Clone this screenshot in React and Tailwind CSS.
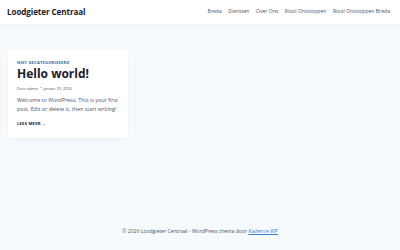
export default function App() {
  const nav = ["Breda", "Diensten", "Over Ons", "Riool Ontstoppen", "Riool Ontstoppen Breda"];

  return (
    <div className="h-[250px] w-[400px] flex flex-col bg-[#f7fafc] font-['Open_Sans',sans-serif] text-[#2d3748]">
      {/* header */}
      <header className="h-[24px] shrink-0 bg-white flex items-center justify-between pl-[7px] pr-[10px] shadow-[0_1px_4px_rgba(0,0,0,0.04)]">
        <div className="text-[8.1px] font-bold text-[#1a202c] tracking-[-0.1px]">Loodgieter Centraal</div>
        <nav className="flex gap-[6.5px] text-[5.1px] text-[#4a5568]">
          {nav.map((n) => (
            <span key={n}>{n}</span>
          ))}
        </nav>
      </header>

      {/* main */}
      <main className="flex-1 px-[8px] pt-[26px]">
        <article className="w-[120px] h-[88px] bg-white shadow-[0_3px_8px_-4px_rgba(0,0,0,0.1)] px-[9px] pt-[10px]">
          <div className="text-[4.1px] font-bold uppercase tracking-[0.2px] text-[#2b6cb0] leading-[5px]">
            Niet gecategoriseerd
          </div>
          <h2 className="text-[12px] font-bold text-[#1a202c] leading-[12px] mt-[3px]">Hello world!</h2>
          <div className="text-[3.8px] text-[#4a5568] leading-[5px] mt-[6px] flex items-center gap-[2px]">
            <span>Door admin</span>
            <span className="text-[3px]">•</span>
            <span>januari 29, 2026</span>
          </div>
          <p className="text-[5.4px] text-[#4a5568] leading-[9px] mt-[5.4px]">
            Welcome to WordPress. This is your first post. Edit or delete it, then start writing!
          </p>
          <div className="text-[4.2px] font-bold uppercase text-[#1a202c] leading-[5px] mt-[7px] tracking-[0.2px]">
            Lees meer →
          </div>
        </article>
      </main>

      {/* footer */}
      <footer className="h-[22px] shrink-0 flex items-start justify-center text-[5.1px] text-[#4a5568]">
        <span className="leading-[6px]">
          © 2026 Loodgieter Centraal - WordPress thema door{" "}
          <span className="text-[#3182ce] underline">Kadence WP</span>
        </span>
      </footer>
    </div>
  );
}
